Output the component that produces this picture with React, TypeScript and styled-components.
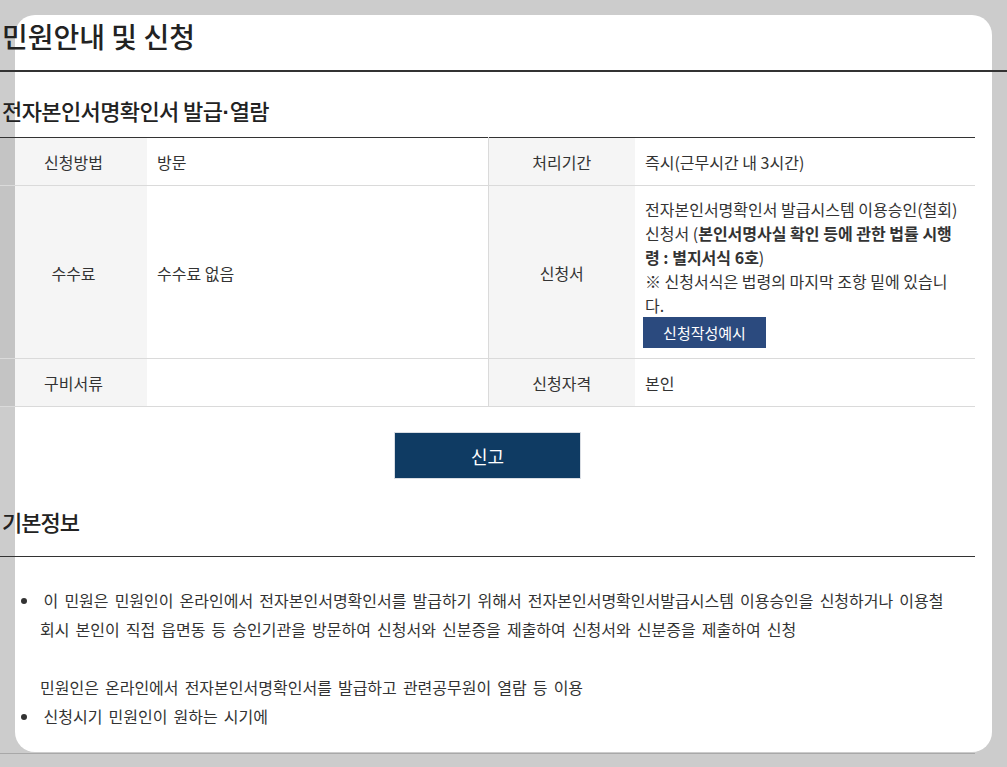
import React from 'react';
import styled, { createGlobalStyle } from 'styled-components';

/**
 * Page-wide resets and the default font.
 */
const GlobalStyle = createGlobalStyle`
    html, body {
        margin: 0;
        padding: 0;
        background: #cccccc;
    }
    body {
        font-family: "Noto Sans CJK KR", "Noto Sans", sans-serif;
        color: #333;
    }
`;

type Row = {
    leftLabel: string;
    left: React.ReactNode;
    rightLabel: string;
    right: React.ReactNode;
    tall?: boolean;
};

/**
 * The rows of the summary table.
 */
const getRows = (): Row[] => [
    { leftLabel: '신청방법', left: '방문', rightLabel: '처리기간', right: '즉시(근무시간 내 3시간)' },
    {
        leftLabel: '수수료',
        left: '수수료 없음',
        rightLabel: '신청서',
        tall: true,
        right: (
            <>
                전자본인서명확인서 발급시스템 이용승인(철회) 신청서 (
                <strong>본인서명사실 확인 등에 관한 법률 시행령 : 별지서식 6호</strong>)
                <br />
                ※ 신청서식은 법령의 마지막 조항 밑에 있습니다.
                <br />
                <SmallButton type="button">신청작성예시</SmallButton>
            </>
        ),
    },
    { leftLabel: '구비서류', left: '', rightLabel: '신청자격', right: '본인' },
];

/**
 * The civil service guide page.
 */
const App = () => (
    <>
        <GlobalStyle />
        <Stage>
            <Card />
            <Content>
                <Title>민원안내 및 신청</Title>
                <Body>
                    <SubTitle>
                        전자본인서명확인서 발급<Dot>·</Dot>열람
                    </SubTitle>
                    <InfoTable>
                        <colgroup>
                            <col style={{ width: 147 }} />
                            <col style={{ width: 341 }} />
                            <col style={{ width: 147 }} />
                            <col style={{ width: 340 }} />
                        </colgroup>
                        <tbody>
                            {getRows().map((r) => (
                                <Tr key={r.leftLabel} $tall={r.tall}>
                                    <Th>{r.leftLabel}</Th>
                                    <Td>{r.left}</Td>
                                    <Th $divider>{r.rightLabel}</Th>
                                    <Td>{r.right}</Td>
                                </Tr>
                            ))}
                        </tbody>
                    </InfoTable>
                    <ButtonRow>
                        <ReportButton type="button">신고</ReportButton>
                    </ButtonRow>
                    <Section>
                        <SectionTitle>기본정보</SectionTitle>
                        <List>
                            <li>
                                <Lead>{'\u00a0'}</Lead>이 민원은 민원인이 온라인에서 전자본인서명확인서를 발급하기 위해서 전자본인서명확인서발급시스템 이용승인을 신청하거나 이용철회시 본인이 직접 읍면동 등 승인기관을 방문하여 신청서와 신분증을 제출하여 신청서와 신분증을 제출하여 신청
                                <br />
                                <br />
                                민원인은 온라인에서 전자본인서명확인서를 발급하고 관련공무원이 열람 등 이용
                            </li>
                            <li>
                                <Lead>{'\u00a0'}</Lead>신청시기 민원인이 원하는 시기에
                            </li>
                        </List>
                    </Section>
                </Body>
            </Content>
        </Stage>
    </>
);

export default App;

/**
 * Grey backdrop; the card and the content share one grid cell.
 */
const Stage = styled.div`
    display: grid;
    min-height: 767px;
    background: #cccccc;
`;

/**
 * The rounded white sheet lying under the content.
 */
const Card = styled.div`
    grid-area: 1 / 1;
    margin: 15px;
    background: #ffffff;
    border-radius: 20px;
`;

const Content = styled.div`
    grid-area: 1 / 1;
    display: flex;
    flex-direction: column;
`;

const Title = styled.h2`
    margin: 0;
    padding: 16px 0 14px 2px;
    font-size: 28px;
    line-height: 40px;
    font-weight: 500;
    color: #222;
    border-bottom: 2px solid #333;
`;

const Body = styled.div`
    width: 975px;
`;

const SubTitle = styled.h3`
    margin: 18px 0 4px;
    padding-left: 2px;
    font-size: 22px;
    line-height: 40px;
    font-weight: 500;
    color: #222;
    letter-spacing: -0.6px;
`;

/**
 * A narrow middle dot between the title words.
 */
const Dot = styled.span`
    font-family: "Liberation Sans", sans-serif;
    font-weight: 700;
    letter-spacing: 0;
`;

const InfoTable = styled.table`
    width: 975px;
    table-layout: fixed;
    border-collapse: collapse;
    border-top: 1px solid #333;
    border-bottom: 1px solid #333;
    font-size: 16px;
    line-height: 24px;
`;

const Tr = styled.tr<{ $tall?: boolean }>`
    height: ${(p) => (p.$tall ? 'auto' : '48px')};
    border-bottom: 1px solid #dadada;
`;

const Th = styled.th<{ $divider?: boolean }>`
    padding: 11px 10px 10px;
    background: rgba(0, 0, 0, 0.04);
    font-weight: 400;
    text-align: center;
    color: #333;
    border-left: ${(p) => (p.$divider ? '1px solid #dadada' : 'none')};
`;

const Td = styled.td`
    padding: 11px 10px 10px;
    color: #333;
    vertical-align: middle;

    strong {
        font-weight: 700;
    }
`;

const SmallButton = styled.button`
    display: inline-block;
    width: 123px;
    height: 31px;
    margin: 0 0 0 -2px;
    padding: 0;
    border: none;
    background: #2b4a7e;
    color: #ffffff;
    font-family: inherit;
    font-size: 15px;
    line-height: 31px;
    vertical-align: top;
`;

const ButtonRow = styled.div`
    display: flex;
    justify-content: center;
    padding-top: 25px;
`;

const ReportButton = styled.button`
    width: 187px;
    height: 47px;
    padding: 0;
    background: #0f3b63;
    border: 1px solid #d9dde3;
    color: #ffffff;
    font-family: inherit;
    font-size: 18px;
`;

const Section = styled.div`
    padding-bottom: 22px;
    border-bottom: 1px solid #a8a8a8;
`;

const SectionTitle = styled.h3`
    margin: 22px 0 0;
    padding: 0 0 15px 2px;
    font-size: 22px;
    line-height: 40px;
    font-weight: 500;
    color: #222;
    letter-spacing: -1px;
    border-bottom: 1px solid #333;
`;

const List = styled.ul`
    margin: 29px 0 0;
    padding: 0 25px 0 40px;
    font-size: 16px;
    line-height: 29px;
    word-spacing: 2.5px;
    color: #333;
`;

/**
 * The small leading space before a list item's first line.
 */
const Lead = styled.span`
    word-spacing: 0;
`;
